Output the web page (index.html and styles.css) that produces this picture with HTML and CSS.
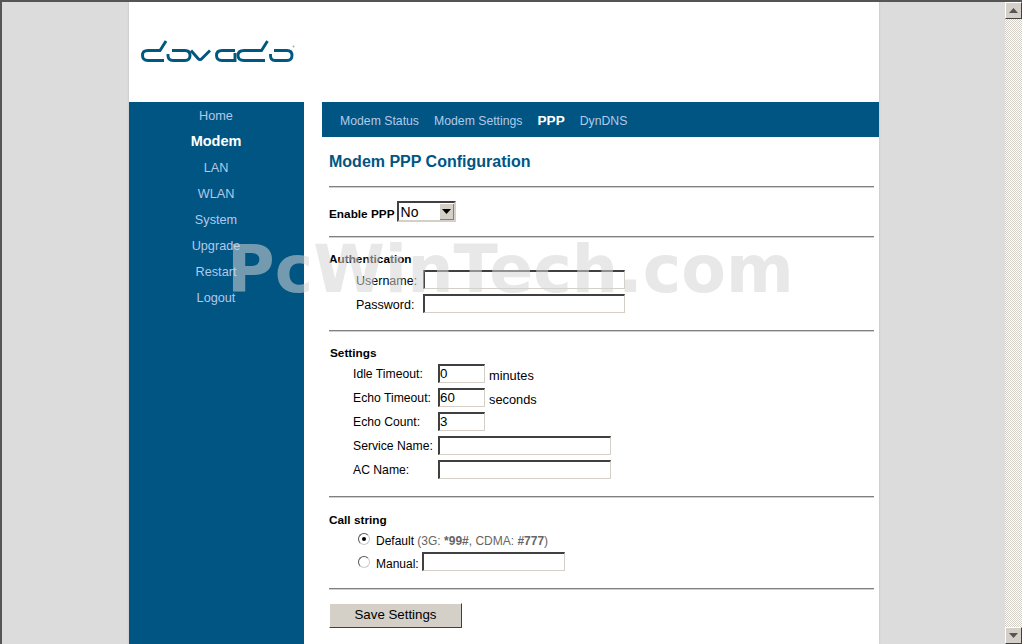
FILE: index.html
```html
<!DOCTYPE html>
<html lang="en">
<head>
  <meta charset="UTF-8">
  <title>Modem PPP Configuration</title>
  <link rel="stylesheet" href="styles.css">
</head>
<body>
  <div class="window">
    <div class="viewport">
      <div class="page">
        <div class="header">
          <svg class="logo" width="156" height="26" viewBox="0 0 156 26" fill="none" stroke="#00587f" stroke-width="2.9">
            <path d="M25 2L19 11.5H7Q1.5 11.5 1.5 16.5Q1.5 21.5 7 21.5H23"/>
            <path d="M31 11.5H44Q49 11.5 49 16.5Q49 21.5 44 21.5H32Q27 21.5 27 16.5V15"/>
            <path d="M50 11.5L57 19.5Q59 21.8 61 19.5L69 11.5"/>
            <path d="M94 11.5H81Q75.5 11.5 75.5 16.5Q75.5 21.5 81 21.5H94V14"/>
            <path d="M126.5 2L120.5 11.5H103Q97 11.5 97 16.5Q97 21.5 103 21.5H124"/>
            <path d="M133 11.5H146Q151 11.5 151 16.5Q151 21.5 146 21.5H134Q129.5 21.5 129.5 16.5V15"/>
            <circle cx="152.5" cy="7.5" r="1" stroke="none" fill="#8fb0c4"/>
          </svg>
        </div>
        <div class="columns">
          <ul class="sidenav">
            <li>Home</li>
            <li class="active">Modem</li>
            <li>LAN</li>
            <li>WLAN</li>
            <li>System</li>
            <li>Upgrade</li>
            <li>Restart</li>
            <li>Logout</li>
          </ul>
          <div class="main">
            <div class="tabs">
              <span>Modem Status</span>
              <span>Modem Settings</span>
              <span class="active">PPP</span>
              <span>DynDNS</span>
            </div>
            <div class="content">
              <h1>Modem PPP Configuration</h1>
              <hr>
              <div class="enable">
                <b>Enable PPP</b>
                <span class="select">No<i class="select-btn"><svg width="9" height="5" viewBox="0 0 9 5"><path d="M0 0H9L4.5 5Z" fill="#000"/></svg></i></span>
              </div>
              <hr>
              <div class="auth">
                <h2>Authentication</h2>
                <div class="row"><label class="lbl-auth">Username:</label><span class="input w-auth"></span></div>
                <div class="row"><label class="lbl-auth">Password:</label><span class="input w-auth"></span></div>
              </div>
              <hr>
              <div class="settings">
                <h2>Settings</h2>
                <div class="row"><label class="lbl-set">Idle Timeout:</label><span class="input w-small">0</span><span class="unit">minutes</span></div>
                <div class="row"><label class="lbl-set">Echo Timeout:</label><span class="input w-small">60</span><span class="unit">seconds</span></div>
                <div class="row"><label class="lbl-set">Echo Count:</label><span class="input w-small">3</span></div>
                <div class="row"><label class="lbl-set">Service Name:</label><span class="input w-name"></span></div>
                <div class="row"><label class="lbl-set">AC Name:</label><span class="input w-name"></span></div>
              </div>
              <hr>
              <div class="callstring">
                <h2>Call string</h2>
                <div class="row"><span class="radio checked"></span><label>Default <span class="hint">(3G: <b>*99#</b>, CDMA: <b>#777</b>)</span></label></div>
                <div class="row"><span class="radio"></span><label>Manual:</label><span class="input w-manual"></span></div>
              </div>
              <hr>
              <span class="button">Save Settings</span>
            </div>
          </div>
        </div>
        <div class="watermark">PcWinTech.com</div>
      </div>
    </div>
    <div class="scrollbar">
      <span class="scroll-btn"><svg width="9" height="5" viewBox="0 0 9 5"><path d="M0 5H9L4.5 0Z" fill="#555"/></svg></span>
      <span class="scroll-btn"><svg width="9" height="5" viewBox="0 0 9 5"><path d="M0 0H9L4.5 5Z" fill="#555"/></svg></span>
    </div>
  </div>
</body>
</html>
```

FILE: styles.css
```css
html, body {
  margin: 0;
  height: 100%;
  overflow: hidden;
}
body {
  font-family: "Liberation Sans", Arial, sans-serif;
  font-size: 12px;
  color: #000;
}
.window {
  display: flex;
  height: 644px;
  box-sizing: border-box;
  border-top: 2px solid #555;
  border-left: 2px solid #555;
}
.viewport {
  flex: 1;
  background: #dcdcdc;
  overflow: hidden;
  position: relative;
}
.page {
  width: 750px;
  height: 642px;
  margin-left: 127px;
  background: #fff;
  box-shadow: 0 0 2px #bbb;
}
.header {
  height: 100px;
  box-sizing: border-box;
  padding: 37px 0 0 12px;
}
.logo {
  display: block;
}
.columns {
  display: flex;
  height: 542px;
}
.sidenav {
  list-style: none;
  margin: 0;
  padding: 1px 0 0;
  width: 175px;
  background: #005583;
  color: #b4c8e8;
  font-size: 12.7px;
  text-align: center;
}
.sidenav li {
  height: 26px;
  line-height: 26px;
  padding-right: 1px;
}
.sidenav .active {
  color: #fff;
  font-weight: bold;
  font-size: 14.5px;
  line-height: 25px;
}
.main {
  margin-left: 18px;
  flex: 1;
}
.tabs {
  height: 35px;
  box-sizing: border-box;
  padding: 2px 0 0 18px;
  background: #005583;
  color: #b4c8e8;
  font-size: 12.25px;
  display: flex;
  gap: 15px;
  align-items: center;
}
.tabs .active {
  color: #fff;
  font-weight: bold;
  font-size: 13.6px;
}
.content {
  padding: 0 5px 0 7px;
}
h1 {
  margin: 0;
  padding-top: 15px;
  height: 34px;
  font-size: 16px;
  line-height: 19px;
  color: #005583;
}
hr {
  margin: 0;
  height: 0;
  border: none;
  border-top: 1px solid #808080;
  border-bottom: 1px solid #d4d0c8;
}
h2 {
  margin: 0;
  font-size: 11.8px;
  line-height: 14px;
}
.enable {
  height: 48px;
  box-sizing: border-box;
  padding-top: 13px;
  display: flex;
  align-items: flex-start;
  gap: 2px;
}
.enable b {
  margin-top: 6px;
  font-size: 11.8px;
}
.select {
  width: 59px;
  height: 21px;
  box-sizing: border-box;
  border: 2px solid;
  border-color: #404040 #d4d0c8 #d4d0c8 #404040;
  font-size: 14px;
  line-height: 18px;
  padding-left: 2px;
  position: relative;
}
.select-btn {
  position: absolute;
  right: 0;
  top: 0;
  width: 15px;
  height: 17px;
  background: #d4d0c8;
  box-shadow: inset 1px 1px #fff, inset -1px -1px #808080;
  display: flex;
  align-items: center;
  justify-content: center;
}
.row {
  display: flex;
  align-items: center;
}
.input {
  box-sizing: border-box;
  display: block;
  height: 19px;
  border: 1px solid;
  border-top-width: 2px;
  border-left-width: 2px;
  border-color: #404040 #d4d0c8 #d4d0c8 #404040;
  font-size: 13.3px;
  line-height: 15px;
  background: #fff;
}
.auth {
  height: 92px;
  padding-top: 14px;
  box-sizing: border-box;
}
.auth h2 {
  margin-bottom: 3px;
}
.auth .row {
  height: 24px;
  margin-left: 27px;
}
.auth .input {
  margin-bottom: 3px;
}
.lbl-auth {
  width: 67px;
  font-size: 12.5px;
}
.w-auth {
  width: 202px;
}
.settings {
  height: 164px;
  padding: 14px 0 0 1px;
  box-sizing: border-box;
}
.settings h2 {
  margin-bottom: 2px;
}
.settings .row {
  height: 24px;
  margin-left: 23px;
}
.settings .input {
  margin-bottom: 2px;
}
.lbl-set {
  width: 85px;
  font-size: 12.2px;
}
.w-small {
  width: 47px;
}
.w-name {
  width: 173px;
}
.unit {
  margin-left: 4px;
  padding-top: 3px;
  font-size: 12.8px;
}
.callstring {
  height: 90px;
  padding-top: 15px;
  box-sizing: border-box;
}
.callstring h2 {
  margin-bottom: 3px;
}
.callstring .row {
  height: 22px;
  margin-left: 29px;
}
.callstring .row + .row {
  height: 24px;
}
.callstring label {
  margin: 0 3px 0 6px;
}
.callstring .input {
  align-self: flex-start;
}
.hint {
  color: #666;
}
.radio {
  width: 12px;
  height: 12px;
  box-sizing: border-box;
  border-radius: 50%;
  border: 1px solid;
  border-color: #555 #ccc #ccc #555;
  background: #fff;
  display: flex;
  align-items: center;
  justify-content: center;
  margin-top: -4px;
}
.radio.checked::after {
  content: "";
  width: 4px;
  height: 4px;
  border-radius: 50%;
  background: #000;
}
.w-manual {
  width: 143px;
}
.button {
  display: block;
  width: 133px;
  height: 25px;
  margin-top: 13px;
  box-sizing: border-box;
  background: #d4d0c8;
  border: 1px solid;
  border-color: #fff #404040 #404040 #fff;
  font-size: 13.3px;
  line-height: 21px;
  text-align: center;
}
.watermark {
  position: absolute;
  left: 225px;
  top: 233px;
  font-family: "DejaVu Sans", sans-serif;
  font-weight: bold;
  font-size: 65px;
  line-height: 70px;
  white-space: nowrap;
  color: rgba(213, 213, 213, 0.54);
}
.scrollbar {
  width: 17px;
  display: flex;
  flex-direction: column;
  justify-content: space-between;
  background: repeating-conic-gradient(#d4d0c8 0 25%, #fff 0 50%) 0 0 / 2px 2px;
}
.scroll-btn {
  width: 17px;
  height: 17px;
  box-sizing: border-box;
  background: #d4d0c8;
  border: 1px solid;
  border-color: #fff #404040 #404040 #fff;
  display: flex;
  align-items: center;
  justify-content: center;
}
```
